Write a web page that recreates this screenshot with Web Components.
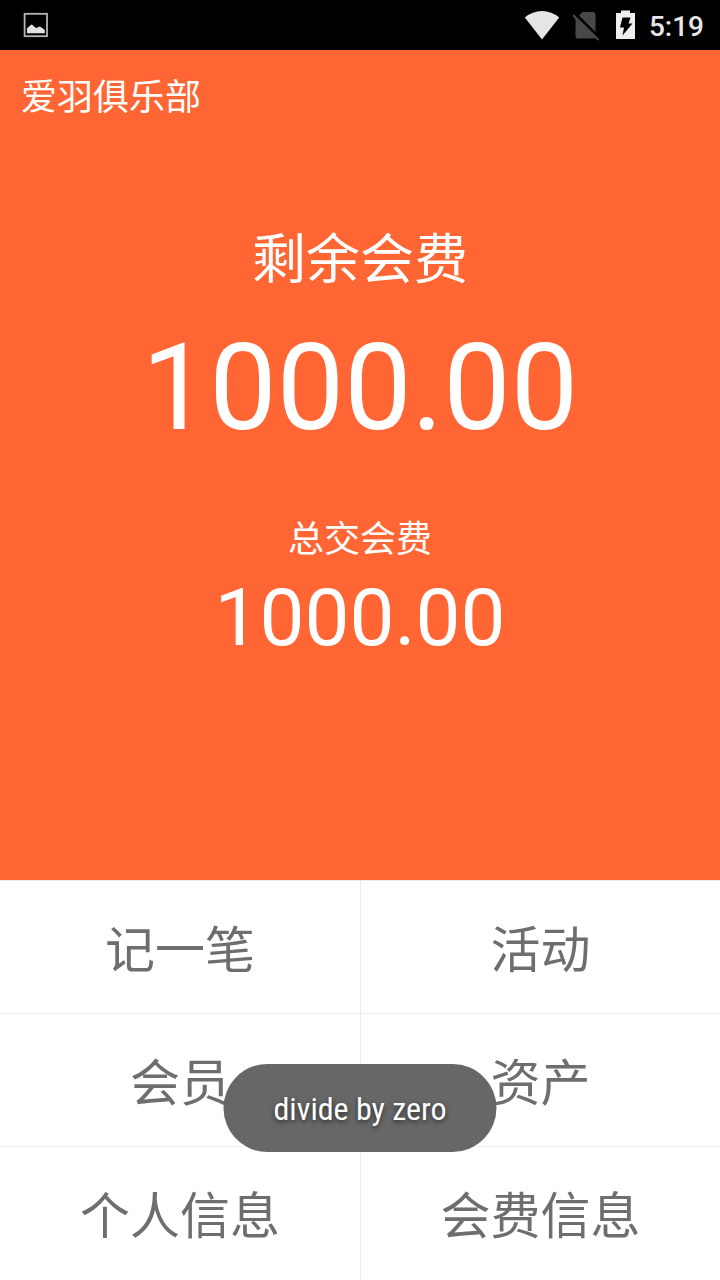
<!DOCTYPE html>
<html lang="zh-CN">
<head>
<meta charset="utf-8">
<meta name="viewport" content="width=device-width, initial-scale=1">
<title>爱羽俱乐部</title>
<style>
  html, body { margin: 0; }
  body { font-family: Roboto, "Noto Sans CJK SC", sans-serif; background: #fff; }
</style>
</head>
<body>
<club-app></club-app>

<template id="club-app">
  <style>
    :host { display: flex; flex-direction: column; min-height: 100vh; position: relative; }
    club-hero { flex: 1; }
  </style>
  <status-bar time="5:19"></status-bar>
  <club-hero>
    <span slot="title">爱羽俱乐部</span>
    <fee-amount size="large" label="剩余会费">1000.00</fee-amount>
    <fee-amount label="总交会费">1000.00</fee-amount>
  </club-hero>
  <menu-grid>
    <menu-item>记一笔</menu-item>
    <menu-item>活动</menu-item>
    <menu-item>会员</menu-item>
    <menu-item>资产</menu-item>
    <menu-item>个人信息</menu-item>
    <menu-item>会费信息</menu-item>
  </menu-grid>
  <toast-message>divide by zero</toast-message>
</template>

<template id="status-bar">
  <style>
    :host { display: flex; align-items: center; box-sizing: border-box; height: 50px; padding: 0 16px 0 22px; background: #000; color: #e6e6e6; }
    svg { display: block; }
    .icons { display: flex; align-items: center; gap: 13px; margin-left: auto; }
    time { font-size: 28px; line-height: 32px; font-weight: 500; padding-top: 3px; }
  </style>
  <svg width="28" height="28" viewBox="0 0 28 28" aria-hidden="true">
    <rect x="2.6" y="2.8" width="22.4" height="22.4" fill="none" stroke="#b4b4b4" stroke-width="1.8"/>
    <path d="M5 22.300V17.500l1.500-1.500 2.500-2.200 1-.2 3.500 3.200h1.500l2.500-1.200 2.500 1.200 2.800 2.300v3.200z" fill="#e2e2e2"/>
  </svg>
  <span class="icons">
    <svg width="36" height="32" viewBox="0 0 36 32" aria-hidden="true">
      <path d="M.8 8.5Q8.500 2 18 2T35.200 8.500L18 30.500z" fill="#e6e6e6"/>
    </svg>
    <svg width="28" height="32" viewBox="0 0 28 32" aria-hidden="true">
      <path d="M9.500 3H20q2.500 0 2.500 2.500v21.500q0 2.500-2.500 2.500H5q-2.500 0-2.500-2.500V10z" fill="#484848"/>
      <path d="M1.500 4l25 25" stroke="#000" stroke-width="3"/>
      <path d="M0 6l25.500 25" stroke="#484848" stroke-width="2.400"/>
    </svg>
    <svg width="22" height="32" viewBox="0 0 22 32" aria-hidden="true">
      <path d="M7 1.500h9V4H21v26H2V4h5z" fill="#eee"/>
      <path d="M8.500 8.500h8l-2 6h4L8.500 26.500l1.500-8H6z" fill="#000"/>
    </svg>
    <time></time>
  </span>
</template>

<template id="club-hero">
  <style>
    :host { display: block; padding: 24px 21px 40px; background: #ff6633; color: #fff; }
    h1 { margin: 0 0 107px; font-size: 36px; line-height: 48px; font-weight: 400; }
    .amounts { display: flex; flex-direction: column; align-items: center; gap: 44px; }
  </style>
  <h1><slot name="title"></slot></h1>
  <div class="amounts"><slot></slot></div>
</template>

<template id="fee-amount">
  <style>
    :host { display: block; text-align: center; }
    p { margin: 0; }
    .label { font-size: 36px; line-height: 48px; }
    .value { font-size: 80px; line-height: 108px; }
    :host([size="large"]) .label { font-size: 54px; line-height: 64px; }
    :host([size="large"]) .value { padding-top: 11px; font-size: 120px; line-height: 168px; }
  </style>
  <p class="label"></p>
  <p class="value"><slot></slot></p>
</template>

<template id="menu-grid">
  <style>
    :host { display: grid; grid-template-columns: 1fr 1fr; background: #fff; }
    ::slotted(:nth-child(even)) { border-left: 1px solid #ececec; }
    ::slotted(:nth-last-child(-n+2)) { padding-bottom: 1px; }
  </style>
  <slot></slot>
</template>

<template id="menu-item">
  <style>
    :host { display: block; border-top: 1px solid #ececec; }
    button { display: block; width: 100%; margin: 0; padding: 38px 0 30px; border: 0; background: none; color: #6e6e6e; font: inherit; font-size: 50px; line-height: 64px; cursor: pointer; }
  </style>
  <button type="button"><slot></slot></button>
</template>

<template id="toast-message">
  <style>
    :host { position: absolute; left: 50%; bottom: 128px; transform: translateX(-50%); box-sizing: border-box; padding: 25px 50px 23px; border-radius: 44px; background: rgba(100, 100, 100, 0.98); color: #fff; font-family: "Roboto Condensed", Roboto, sans-serif; font-size: 32px; line-height: 40px; white-space: nowrap; text-shadow: 0 2px 5px rgba(0, 0, 0, 0.6); }
  </style>
  <span role="status"><slot></slot></span>
</template>

<script>
  class TemplateElement extends HTMLElement {
    constructor() {
      super();
      const template = document.getElementById(this.localName);
      this.attachShadow({ mode: "open" }).append(template.content.cloneNode(true));
    }
  }
  customElements.define("status-bar", class extends TemplateElement {
    connectedCallback() { this.shadowRoot.querySelector("time").textContent = this.getAttribute("time"); }
  });
  customElements.define("fee-amount", class extends TemplateElement {
    connectedCallback() { this.shadowRoot.querySelector(".label").textContent = this.getAttribute("label"); }
  });
  for (const name of ["club-hero", "menu-grid", "menu-item", "toast-message", "club-app"]) {
    customElements.define(name, class extends TemplateElement {});
  }
</script>
</body>
</html>
